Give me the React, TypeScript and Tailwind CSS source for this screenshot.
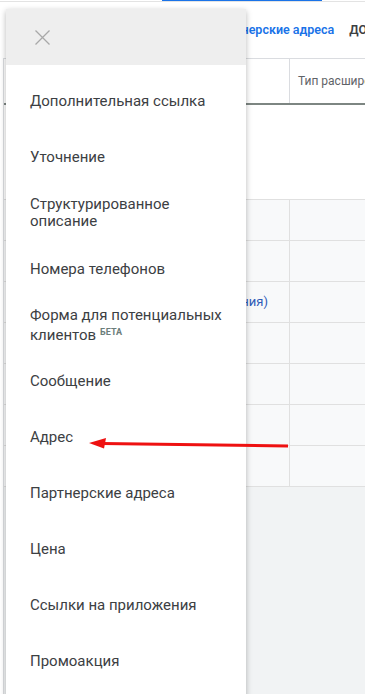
const ITEMS: { label: string; beta?: boolean }[] = [
  { label: "Дополнительная ссылка" },
  { label: "Уточнение" },
  { label: "Структурированное описание" },
  { label: "Номера телефонов" },
  { label: "Форма для потенциальных клиентов", beta: true },
  { label: "Сообщение" },
  { label: "Адрес" },
  { label: "Партнерские адреса" },
  { label: "Цена" },
  { label: "Ссылки на приложения" },
  { label: "Промоакция" },
]

const ROWS = ["", "", "Ссылки на приложения (без расширения)", "", "", "", ""]

function Backdrop() {
  return (
    <div className="flex flex-col min-h-full">
      {/* tab bar */}
      <div className="h-[1px] bg-white">
        <div className="ml-[162px] w-[160px] h-[1px] bg-[#1a73e8]" />
      </div>
      <div className="h-[1px] bg-[#e3e3e3]" />
      <div className="h-[56px] flex items-center gap-[15px] pl-[213px] whitespace-nowrap overflow-hidden text-[12.5px] font-semibold">
        <span className="text-[#1a73e8]">Партнерские адреса</span>
        <span className="text-[#3c4043]">ДОПОЛНИТЕЛЬНО</span>
      </div>

      {/* table */}
      <div className="ml-[3px] border-l border-[#dadce0] flex flex-col flex-1">
        <div className="h-[45px] flex border-t border-[#dadce0]">
          <div className="w-[286px] border-r border-[#dadce0]" />
          <div className="flex-1 flex items-center pl-[8px] text-[12px] text-[#5f6368] whitespace-nowrap overflow-hidden">
            Тип расширения
          </div>
        </div>
        <div className="h-[2px] bg-[#7d8682]" />
        <div className="h-[94px] bg-white" />
        {ROWS.map((text, i) => (
          <div key={i} className="h-[41px] flex border-t border-[#e0e0e0] bg-[#f8f9fa]">
            <div className="w-[286px] border-r border-[#e0e0e0] flex items-center justify-end pr-[21px] text-[13px] text-[#2f5bb7] whitespace-nowrap overflow-hidden">
              {text}
            </div>
            <div className="flex-1" />
          </div>
        ))}
        <div className="flex-1 border-t border-[#e0e0e0] bg-[#f1f3f4]" />
      </div>
    </div>
  )
}

function Panel() {
  return (
    <div className="absolute left-[6px] top-[9px] w-[240px] h-[700px] bg-white shadow-[0_2px_6px_rgba(0,0,0,0.28)] flex flex-col">
      <div className="h-14 bg-[#eeeeee] flex items-center pl-[29px] shrink-0">
        <svg width="15" height="15" viewBox="0 0 15 15" className="mt-[1px]">
          <path d="M0.5 0.5L14.5 14.5M14.5 0.5L0.5 14.5" stroke="#a8a8a8" strokeWidth="1.3" />
        </svg>
      </div>
      <div className="pt-2 flex flex-col">
        {ITEMS.map((item) => (
          <div key={item.label} className="h-14 flex items-center pl-6 pr-4 text-[15px] leading-[17px] text-[#3c4043]">
            <span>
              {item.label}
              {item.beta && (
                <span className="ml-[4px] text-[9px] font-bold text-[#6b7d7a] align-[5px]">БЕТА</span>
              )}
            </span>
          </div>
        ))}
      </div>
    </div>
  )
}

function Arrow() {
  return (
    <svg className="absolute left-0 top-0 pointer-events-none" width="365" height="694">
      <line x1="288" y1="446" x2="102" y2="443.5" stroke="#ee1111" strokeWidth="3" />
      <polygon points="89,443 106,438 104,448.5" fill="#ee1111" />
    </svg>
  )
}

export default function App() {
  return (
    <div className="relative w-[365px] h-[694px] overflow-hidden bg-white font-['Roboto',sans-serif]">
      <Backdrop />
      <Panel />
      <Arrow />
    </div>
  )
}
